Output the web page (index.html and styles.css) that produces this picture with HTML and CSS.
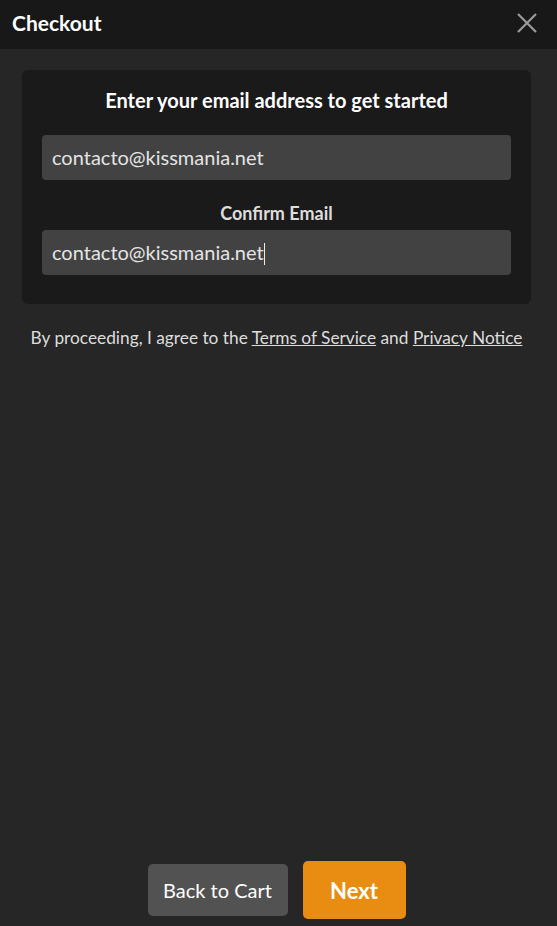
FILE: index.html
```html
<!DOCTYPE html>
<html lang="en">
<head>
    <meta charset="UTF-8">
    <meta name="viewport" content="width=device-width, initial-scale=1.0">
    <title>Checkout</title>
    <link rel="stylesheet" href="styles.css">
</head>
<body>

    <div class="modal">
        <div class="header">
            <h1>Checkout</h1>
            <button class="close-btn" aria-label="Close">
                <svg width="20" height="20" viewBox="0 0 20 20"><path d="M1 1 L19 19 M19 1 L1 19" stroke="#9a9a9a" stroke-width="2.2" fill="none"/></svg>
            </button>
        </div>

        <div class="content">
            <div class="card">
                <h2>Enter your email address to get started</h2>
                <div class="field">contacto@kissmania.net</div>
                <p class="label">Confirm Email</p>
                <div class="field">contacto@kissmania.net<span class="caret"></span></div>
            </div>

            <p class="terms">By proceeding, I agree to the <a href="#">Terms of Service</a> and <a href="#">Privacy Notice</a></p>
        </div>

        <div class="actions">
            <button class="btn back-btn">Back to Cart</button>
            <button class="btn next-btn">Next</button>
        </div>
    </div>

</body>
</html>
```

FILE: styles.css
```css
body {
    margin: 0;
    background-color: #262626;
    color: #fff;
    font-family: Lato, "Open Sans", sans-serif;
}
.modal {
    height: 926px;
    display: flex;
    flex-direction: column;
}
.header {
    height: 49px;
    background-color: #181818;
    display: flex;
    align-items: center;
    justify-content: space-between;
    padding: 0 20px 0 12px;
    flex-shrink: 0;
}
h1 {
    margin: 0;
    font-size: 21px;
    font-weight: bold;
    color: #fff;
    padding-bottom: 4px;
}
.close-btn {
    background: none;
    border: none;
    padding: 0;
    width: 20px;
    height: 20px;
    cursor: pointer;
    margin-bottom: 3px;
}
.content {
    flex: 1;
    padding: 21px 26px 0 22px;
}
.card {
    background-color: #1a1a1a;
    border-radius: 6px;
    padding: 19px 20px 29px;
    text-align: center;
}
h2 {
    margin: 0 0 23px;
    font-size: 20px;
    font-weight: bold;
    line-height: 23px;
}
.field {
    height: 45px;
    background-color: #424242;
    border-radius: 4px;
    color: #e4e4e4;
    font-size: 20px;
    line-height: 45px;
    text-align: left;
    padding-left: 10px;
}
.caret {
    display: inline-block;
    width: 1px;
    height: 22px;
    background-color: #eee;
    vertical-align: -5px;
}
.label {
    margin: 22px 0 6px;
    font-size: 18px;
    font-weight: bold;
    color: #ddd;
    line-height: 22px;
}
.terms {
    margin: 23px 0 0;
    text-align: center;
    font-size: 17.3px;
    color: #ddd;
}
.terms a {
    color: #ddd;
    text-decoration: underline;
}
.actions {
    display: flex;
    justify-content: center;
    align-items: center;
    gap: 15px;
    padding-bottom: 7px;
    padding-right: 4px;
}
.btn {
    border: none;
    border-radius: 5px;
    color: #fff;
    font-family: Lato, "Open Sans", sans-serif;
    cursor: pointer;
}
.back-btn {
    width: 140px;
    height: 52px;
    background-color: #525252;
    font-size: 20px;
}
.next-btn {
    width: 103px;
    height: 58px;
    background-color: #e88d12;
    font-size: 22px;
    font-weight: bold;
}
```
